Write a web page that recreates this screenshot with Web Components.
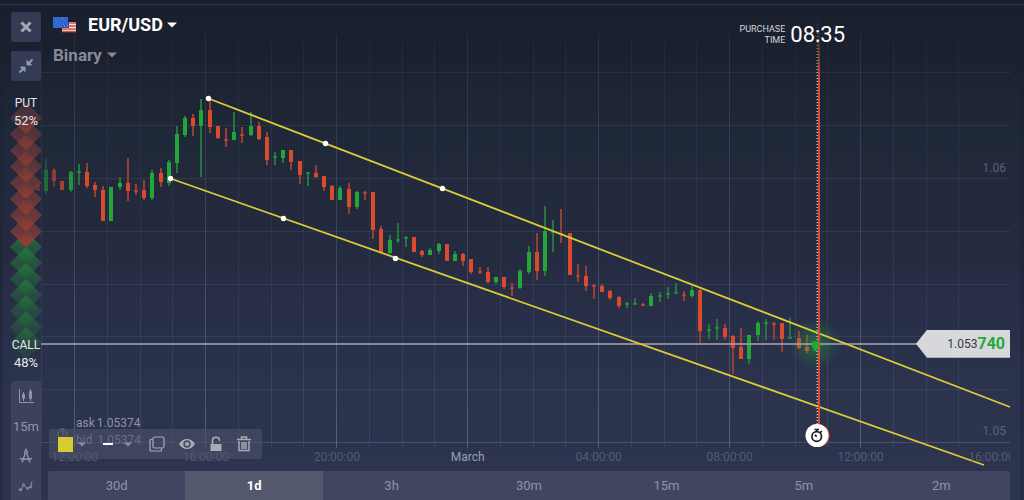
<!DOCTYPE html>
<html lang="en">
<head>
<meta charset="utf-8">
<title>EUR/USD</title>
<style>
  body { margin: 0; background: #1a1f2e; font-family: Roboto, sans-serif; }
</style>
</head>
<body>
<trade-room></trade-room>

<script>
class Base extends HTMLElement {
  constructor() {
    super();
    this.attachShadow({ mode: 'open' }).innerHTML = '<style>*{box-sizing:border-box}button,select{font:inherit;color:inherit;background:none;border:0;margin:0;padding:0;appearance:none;cursor:pointer}svg{display:block}</style>' + this.view();
  }
}

/* [bodyTop, bodyBottom, wickTop, wickBottom], g = up, r = down */
const CANDLES = `g170,190,159,194 r170,180,168,187 r181,189,181,189 g172,189,171,192 g171,172,164,185 r172,185,163,188 r185,189,182,197 r190,220,186,221 g187,220,187,220 g183,186,177,190
r183,190,158,201 r190,191,184,195 r190,197,180,200 g173,197,170,200 r173,181,168,187 g162,182,160,186 g134,162,126,173 g118,134,116,137 r118,125,114,136 g110,125,99,177
r110,126,98,133 r126,137,126,139 r139,140,128,147 g132,139,112,140 r134,135,127,143 g126,134,112,136 r126,138,122,140 r137,159,132,165 g156,157,152,165 g150,157,150,163
r150,161,150,170 r161,174,161,184 g172,173,172,186 r173,176,165,178 r176,186,176,191 r186,199,185,200 g188,199,186,200 r189,206,183,214 g192,206,191,209 r192,193,191,200
r192,229,192,239 r229,251,226,253 g240,252,235,254 g239,240,223,243 g237,238,236,247 r237,251,237,252 r251,254,250,257 g250,254,248,255 g244,250,243,254 r244,260,244,260
g254,260,251,260 r254,260,253,266 r259,271,259,274 r271,272,267,274 r272,281,267,283 g277,281,277,284 r277,286,277,289 r287,288,283,296 g271,287,269,289 g252,271,246,274
r252,270,233,280 g231,270,206,276 g231,232,220,252 r233,234,209,243 r233,274,233,274 r275,276,264,282 r276,285,266,291 r285,286,284,299 r286,291,284,291 r291,297,290,300
r297,305,296,308 g303,304,302,308 g303,304,298,304 r304,305,303,306 g296,305,293,306 g295,296,292,302 g293,294,287,299 g292,293,283,293 r294,295,291,301 g290,295,286,298
r290,330,289,343 g329,330,324,339 g327,328,319,340 r328,336,324,340 r336,347,335,374 r347,358,328,359 g335,358,335,364 g323,334,321,341 g322,323,319,340 r323,324,322,340
r323,338,323,352 g337,338,318,338 r338,347,331,349 r347,350,335,353`.split(/\s+/);

customElements.define('price-chart', class extends Base {
  view() {
    let grid = '';
    for (let i = 0; i < 29; i++) {
      const x = 41.75 + i * 32.75, major = i % 4 === 1;
      grid += `<rect x="${Math.round(x - 0.5)}" y="${major ? 34 : 42}" width="1" height="${major ? 414 : 405}" fill="url(#${major ? 'major' : 'minor'})"/>`;
    }
    [72, 125, 178, 231, 284, 336, 389, 442].forEach(y =>
      grid += `<rect x="42" y="${y}" width="968" height="1" fill="#8a9cd0" opacity="${y === 442 ? .27 : .13}"/>`);
    let bars = '';
    CANDLES.forEach((c, i) => {
      const [a, b, w, z] = c.slice(1).split(',').map(Number);
      const up = c[0] === 'g', x = Math.round(46 + i * 8.18), o = [.5, .6, .7, .85][i] || 1;
      bars += `<g opacity="${o}"><rect x="${x - 1}" y="${w}" width="2" height="${z - w}" fill="${up ? '#24763c' : '#963f34'}"/>` +
        `<rect x="${x - 2}" y="${a}" width="4" height="${b - a + 1}" fill="${up ? '#23a638' : '#db4a2b'}" opacity="${b - a < 2 ? .6 : 1}"/></g>`;
    });
    const dots = [[208, 98], [325, 143], [442, 188], [170, 178], [283, 218], [395, 258]]
      .map(([x, y]) => `<circle cx="${x + .5}" cy="${y + .5}" r="2.7" fill="#fff"/>`).join('');
    const times = [[74.5, '12:00:00'], [205.5, '16:00:00'], [336.5, '20:00:00'], [467.5, 'March'], [598.5, '04:00:00'], [729.5, '08:00:00'], [860.5, '12:00:00'], [992, '16:00:00']]
      .map(([x, t]) => `<span class="${t === 'March' ? 'day' : ''}" style="left:${((x - 40) / 9.7).toFixed(1)}%">${t}</span>`).join('');
    return `<style>
      :host { display: block; position: relative; font-size: 12px; line-height: 16px; color: #555c74; }
      .plot { position: absolute; inset: 0; width: 100%; height: 100%; overflow: visible; }
      .times { position: absolute; left: 0; right: 0; bottom: 6px; height: 16px; overflow: hidden; }
      .times span { position: absolute; transform: translateX(-50%); }
      .times .day { color: #9a9fae; }
      .price { position: absolute; right: 4px; transform: translateY(-50%); color: #5c637a; }
      .quotes { position: absolute; left: 36px; bottom: 22px; color: #8e93a4; line-height: 17px; }
      .quotes div { display: flex; gap: 2px; }
      .quotes div + div { gap: 5px; }
      .help { position: absolute; left: 17px; bottom: 32px; }
      .stop { position: absolute; left: 80.1%; top: 92.5%; transform: translate(-50%, -50%); }
    </style>
    <svg class="plot" viewBox="40 0 970 471" preserveAspectRatio="none" aria-hidden="true">
      <defs>
        <linearGradient id="major" x1="0" x2="0" y1="0" y2="1"><stop offset="0" stop-color="#7d88b4" stop-opacity=".15"/><stop offset="1" stop-color="#a0a6c0" stop-opacity=".36"/></linearGradient>
        <linearGradient id="minor" x1="0" x2="0" y1="0" y2="1"><stop offset="0" stop-color="#6a7db4" stop-opacity=".1"/><stop offset="1" stop-color="#8a96c0" stop-opacity=".15"/></linearGradient>
        <linearGradient id="fade" x1="0" x2="0" y1="0" y2="1"><stop offset="0" stop-color="#d64b2e" stop-opacity="0"/><stop offset=".14" stop-color="#d64b2e"/><stop offset="1" stop-color="#d64b2e"/></linearGradient>
        <linearGradient id="dotfade" gradientUnits="userSpaceOnUse" x1="0" x2="0" y1="15" y2="80"><stop offset="0" stop-color="#c4c7cf" stop-opacity="0"/><stop offset="1" stop-color="#c4c7cf"/></linearGradient>
        <radialGradient id="glow"><stop offset="0" stop-color="#22a83a" stop-opacity=".5"/><stop offset=".5" stop-color="#22a83a" stop-opacity=".22"/><stop offset="1" stop-color="#22a83a" stop-opacity="0"/></radialGradient>
      </defs>
      ${grid}
      <rect x="36" y="184" width="4" height="7" fill="#db4a2b" opacity=".35"/>
      ${bars}
      <circle cx="815" cy="344" r="26" fill="url(#glow)"/>
      <rect x="41" y="343" width="880" height="2" fill="#9da0ab" opacity=".8"/>
      <path d="M208.500 98.500L1010 407M170.500 178.500L984 465" stroke="#d9cc36" stroke-width="1.800" fill="none"/>
      ${dots}
      <path d="M817.500 15V424" stroke="url(#dotfade)" stroke-width="2" stroke-dasharray="1 2" fill="none"/>
      <rect x="818" y="28" width="2" height="398" fill="url(#fade)"/>
      <rect x="812" y="341" width="7" height="8" rx="3" fill="#23a93a"/><rect x="814" y="346" width="3" height="5" fill="#23a93a"/>
    </svg>
    <div class="times">${times}</div>
    <span class="price" style="top:35.600%">1.06</span>
    <span class="price" style="top:91.500%">1.05</span>
    <svg class="help" width="11" height="11" viewBox="0 0 11 11" fill="none" stroke="#8b90a5"><circle cx="5.500" cy="5.500" r="4.500"/><path d="M4 4.500Q4 3 5.500 3T7 4.500Q7 5.300 5.500 6V7M5.500 7.500V8.500"/></svg>
    <div class="quotes"><div><span>ask</span><span>1.05374</span></div><div><span>bid</span><span>1.05374</span></div></div>
    <svg class="stop" width="26" height="26" viewBox="0 0 26 26">
      <circle cx="14" cy="12.500" r="11.500" fill="#d84b2d"/><circle cx="13" cy="12.500" r="11.500" fill="#fff"/>
      <g fill="none" stroke="#1a1d28" stroke-width="1.700"><circle cx="12.700" cy="13.500" r="4.800"/><path d="M10.500 6.500H15M12.700 6.500V9M16 9.800L17.800 8M12.700 13.500L10.800 11.800"/></g>
    </svg>
    <slot></slot>`;
  }
});

customElements.define('price-tag', class extends Base {
  view() {
    return `<style>
      :host { position: absolute; right: 0; top: 73%; transform: translateY(-50%); display: flex; justify-content: flex-end; align-items: center;
        width: 94px; height: 28px; padding-right: 5px; box-sizing: border-box; background: #d7d8dc; color: #33384c; font-size: 12px; line-height: 28px;
        clip-path: polygon(0 50%, 11px 0, 100% 0, 100% 100%, 11px 100%); }
      b { color: #23a93a; font-size: 16px; }
    </style><span>1.053</span><b>740</b>`;
  }
});

customElements.define('purchase-timer', class extends Base {
  view() {
    return `<style>
      :host { position: absolute; right: 17%; top: 23px; display: flex; align-items: center; gap: 5px; color: #fff; }
      .label { font-size: 9px; line-height: 11px; text-align: right; color: #d6d8df; }
      .time { font-size: 22px; line-height: 24px; }
    </style><span class="label">PURCHASE<br>TIME</span><span class="time">08:35</span>`;
  }
});

customElements.define('asset-header', class extends Base {
  view() {
    const arrow = '<svg width="10" height="6" viewBox="0 0 10 6" fill="currentColor"><path d="M0 0.500H10L5 5.500Z"/></svg>';
    return `<style>
      :host { display: flex; flex-direction: column; align-items: flex-start; gap: 7px; padding: 13px 0 0 13px; font-size: 18px; line-height: 24px; font-weight: 700; color: #fff; }
      .row { display: flex; align-items: center; gap: 4px; }
      .row > .flags { margin-right: 8px; }
      .type { color: #858a99; gap: 5px; font-size: 17px; line-height: 22px; }
      select { display: block; }
    </style>
    <div class="row">
      <svg class="flags" width="23" height="16" viewBox="0 0 23 16"><rect width="15" height="11" fill="#2f66d8"/><path d="M4 2h1M10 2h1M3 5h1M12 5h1M5 8h1M8 1h1M8 9h1" stroke="#8aa55c" opacity=".6"/>
        <rect x="9" y="5" width="14" height="10" fill="#e8e4e6"/><path d="M9 6h14M9 9h14M9 12h14M9 14.500h14" stroke="#d9533f" stroke-width="1.300"/><rect x="9" y="5" width="7" height="6" fill="#2b55b8"/><path d="M10 7h1M13 7h1M11 9h1M14 9h1" stroke="#a9bdea"/></svg>
      <select aria-label="Asset"><option>EUR/USD</option></select>${arrow}
    </div>
    <div class="row type"><select aria-label="Option type"><option>Binary</option></select>${arrow}</div>`;
  }
});

customElements.define('sentiment-gauge', class extends Base {
  view() {
    let g = '';
    for (let i = 0; i < 7; i++) {
      const y = 145 + i * 16;
      g += `<path d="M16 ${y - 16}L32 ${y}L16 ${y + 16}L0 ${y}Z" fill="url(#call)" opacity="${(.95 - i * .06).toFixed(2)}"/>`;
    }
    for (let i = 7; i >= 0; i--) {
      const y = 16 + i * 16.200;
      g += `<path d="M16 ${y - 16}L32 ${y}L16 ${y + 16}L0 ${y}Z" fill="url(#put)" opacity="${(.6 + i * .05).toFixed(2)}"/>`;
    }
    return `<style>
      :host { display: grid; justify-items: center; color: #e6e8ee; font-size: 12px; line-height: 18px; }
      svg, .labels { grid-area: 1 / 1; }
      svg { margin-top: 8px; }
      .labels { display: flex; flex-direction: column; justify-content: space-between; text-align: center; z-index: 1; }
      .labels div { display: grid; }
      .pct { font-size: 13px; }
    </style>
    <svg width="32" height="260" viewBox="0 0 32 260" aria-hidden="true"><defs>
      <linearGradient id="put" x1="0" x2="0" y1="0" y2="1"><stop offset="0" stop-color="#5a393e"/><stop offset=".5" stop-color="#6f3939"/><stop offset="1" stop-color="#a53e32"/></linearGradient>
      <linearGradient id="call" x1="0" x2="0" y1="0" y2="1"><stop offset="0" stop-color="#238038"/><stop offset=".5" stop-color="#26573f"/><stop offset="1" stop-color="#264c42"/></linearGradient>
    </defs>${g}</svg>
    <div class="labels"><div><span>PUT</span><span class="pct">52%</span></div><div><span>CALL</span><span class="pct">48%</span></div></div>`;
  }
});

customElements.define('side-rail', class extends Base {
  view() {
    return `<style>
      :host { display: flex; flex-direction: column; align-items: center; gap: 9px; padding-top: 12px; box-sizing: border-box; color: #9095a5; font-size: 13px; }
      button { display: grid; place-items: center; width: 30px; height: 30px; }
      .box { background: #333b55; border-radius: 2px; }
      sentiment-gauge { margin-top: 4px; height: 278px; }
      .tools { margin-top: auto; background: #3c425b; border-radius: 2px 2px 0 0; height: 119px; overflow: hidden; }
    </style>
    <button class="box" aria-label="Close"><svg width="12" height="12" viewBox="0 0 12 12" stroke="#a5a9b5" stroke-width="3"><path d="M1.500 1.500L10.500 10.500M10.500 1.500L1.500 10.500"/></svg></button>
    <button class="box" aria-label="Collapse"><svg width="16" height="16" viewBox="0 0 16 16" fill="#9599a8" stroke="#9599a8"><path d="M9 2.500V7H13.500ZM7 13.500V9H2.500Z"/><path d="M10 6L14.500 1.500M1.500 14.500L6 10" stroke-width="2"/></svg></button>
    <sentiment-gauge></sentiment-gauge>
    <div class="tools">
      <button aria-label="Chart type"><svg width="16" height="15" viewBox="0 0 16 15" fill="none" stroke="currentColor"><path d="M1.500 0V13.500H16M5.500 3V12M12.500 0V12"/><path d="M4.500 5.500h2v4h-2zM11.500 2.500h2v7h-2z" fill="currentColor"/></svg></button>
      <button>15m</button>
      <button aria-label="Drawing tools"><svg width="14" height="16" viewBox="0 0 14 16" fill="none" stroke="currentColor" stroke-width="1.400"><path d="M7 0.500V3M6.300 5L3 14.500M7.700 5L11 14.500M1 10.500Q7 12 13 10.500"/><circle cx="7" cy="4" r="1.400"/></svg></button>
      <button aria-label="Indicators"><svg width="16" height="12" viewBox="0 0 16 12" fill="none" stroke="currentColor"><path d="M0.500 9L3 10L5.500 5L9.500 8.500L12.500 7L14 1.500"/><circle cx="5.500" cy="4.500" r="1"/><circle cx="2.500" cy="10" r="1"/><circle cx="9.500" cy="8.500" r="1"/><circle cx="12.500" cy="7" r="1"/></svg></button>
    </div>`;
  }
});

customElements.define('draw-toolbar', class extends Base {
  view() {
    const arrow = '<svg width="8" height="5" viewBox="0 0 8 5" fill="#8a8fa0"><path d="M0 0.500H8L4 4.500Z"/></svg>';
    return `<style>
      :host { display: flex; align-items: center; gap: 14px; width: 213px; height: 30px; box-sizing: border-box; padding: 0 7px 0 9px; background: rgba(76, 82, 106, .6); border-radius: 2px; color: #a7abb7; }
      button { display: flex; align-items: center; justify-content: center; height: 30px; }
      .pick { gap: 5px; }
      .swatch { width: 15px; height: 15px; background: #d7cc2f; }
      .stroke { width: 10px; height: 2px; background: #fff; }
      .line { margin: 0 3px; gap: 11px; }
    </style>
    <button class="pick" aria-label="Colour"><span class="swatch"></span>${arrow}</button>
    <button class="line" aria-label="Line width"><span class="stroke"></span>${arrow}</button>
    <button aria-label="Duplicate"><svg width="16" height="16" viewBox="0 0 16 16" fill="none" stroke="currentColor" stroke-width="1.200"><rect x="4" y="1" width="11" height="11" rx="1.500"/><path d="M3.500 3.500H2Q1 3.500 1 4.500V14Q1 15 2 15H11.500Q12.500 15 12.500 14V12.500"/></svg></button>
    <button aria-label="Visibility"><svg width="16" height="12" viewBox="0 0 16 12"><path d="M0 6Q3 1 8 1T16 6Q13 11 8 11T0 6Z" fill="currentColor"/><circle cx="8" cy="6" r="3.700" fill="#454b62"/><circle cx="8" cy="6" r="2.100" fill="currentColor"/></svg></button>
    <button aria-label="Lock"><svg width="14" height="16" viewBox="1 0 14 16" fill="none" stroke="currentColor" stroke-width="1.600"><path d="M4.500 8V4.500Q4.500 1.200 8 1.200T11.500 4.500V5"/><path d="M2.500 8h11v7h-11z" fill="currentColor" stroke="none"/></svg></button>
    <button aria-label="Delete"><svg width="14" height="16" viewBox="0 0 14 16" fill="none" stroke="currentColor" stroke-width="1.500"><path d="M0 3.500H14M4.500 3V1H9.500V3M2 5V14.500H12V5M5 6V13M7 6V13M9 6V13"/></svg></button>`;
  }
});

customElements.define('time-tabs', class extends Base {
  view() {
    return `<style>
      :host { display: grid; grid-template-columns: repeat(7, 1fr); background: #40465f; color: #8f94a4; font-size: 13px; line-height: 29px; border-radius: 2px 2px 0 0; overflow: hidden; }
      button[aria-pressed=true] { background: #53586c; color: #fff; font-weight: 700; }
    </style>` + ['30d', '1d', '3h', '30m', '15m', '5m', '2m'].map(t => `<button aria-pressed="${t === '1d'}">${t}</button>`).join('');
  }
});

customElements.define('trade-room', class extends Base {
  view() {
    return `<style>
      :host { display: grid; grid-template: minmax(0, 1fr) 29px / 40px minmax(0, 1fr) 14px; min-height: 100vh;
        background: linear-gradient(#1a1f2e 0, #1b202f 10%, #1f2838 26%, #232a3e 45%, #282f48 64%, #2c334d 80%, #2d344f 100%); position: relative; }
      :host::before { content: ""; position: absolute; inset: 0; border: solid #1a2135; border-width: 0 4px 0 3px; opacity: .4; pointer-events: none; }
      :host::after { content: ""; position: absolute; left: 0; right: 0; top: 4px; height: 1px; background: #2b3657; }
      price-chart { grid-area: 1 / 2; }
      asset-header { grid-area: 1 / 2; align-self: start; justify-self: start; z-index: 1; }
      draw-toolbar { grid-area: 1 / 2; align-self: end; justify-self: start; margin: 0 0 12px 9px; z-index: 1; }
      time-tabs { grid-area: 2 / 2; margin-left: 8px; }
      side-rail { grid-area: 1 / 1 / 3 / 2; width: 30px; margin-left: 11px; z-index: 1; }
    </style>
    <side-rail></side-rail>
    <price-chart><purchase-timer></purchase-timer><price-tag></price-tag></price-chart>
    <asset-header></asset-header>
    <draw-toolbar></draw-toolbar>
    <time-tabs></time-tabs>`;
  }
});
</script>
</body>
</html>
